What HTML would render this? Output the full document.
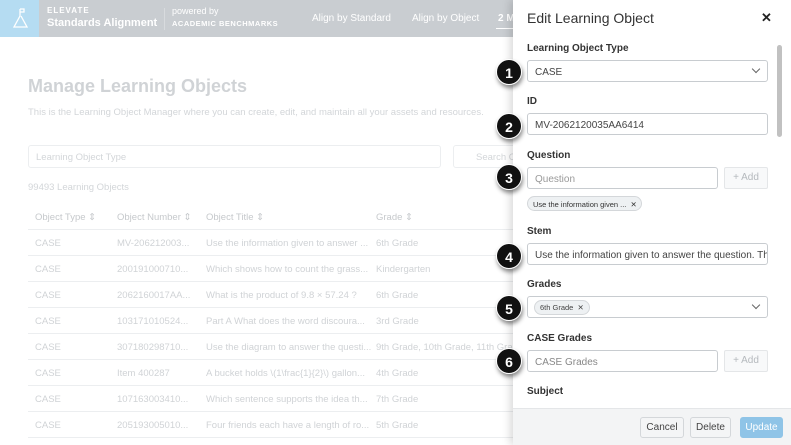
<!DOCTYPE html>
<html><head><meta charset="utf-8"><style>
*{box-sizing:border-box;margin:0;padding:0}
body{width:791px;height:445px;overflow:hidden;position:relative;font-family:"Liberation Sans",sans-serif;background:#fff;color:#333}
.hdr{position:absolute;left:0;top:0;width:791px;height:37px;background:#c9cdd1}
.logo{position:absolute;left:0;top:0;width:39px;height:37px;background:#b5dcf2}
.t{position:absolute;white-space:nowrap}
.row{position:absolute;left:28px;width:490px;height:26px;border-bottom:1px solid #eceef0;font-size:9.5px;color:#d0d3d6}
.row span{position:absolute;top:8px;white-space:nowrap}
.panel{position:absolute;left:513px;top:0;width:278px;height:445px;background:#fff;box-shadow:-3px 0 8px rgba(0,0,0,.15)}
.lbl{position:absolute;left:14px;font-size:10px;font-weight:bold;color:#333}
.inp{position:absolute;left:14px;width:241px;height:22px;border:1px solid #c8ccd0;border-radius:3px;font-size:10px;color:#444;padding:6px 7px;white-space:nowrap;overflow:hidden}
.add{position:absolute;left:211px;width:44px;height:22px;border:1px solid #e4e6e8;background:#f8f9fa;border-radius:2px;font-size:10px;color:#b5b9bd;text-align:center;line-height:20px}
.b{position:absolute;width:26px;height:26px;border-radius:50%;background:#111;color:#fff;font-weight:bold;font-size:14px;text-align:center;line-height:26px;box-shadow:1px 3px 4px rgba(0,0,0,.45);border:1px solid #fff}
.chev{position:absolute;right:8px;top:5px;width:6px;height:6px;border-right:1px solid #666;border-bottom:1px solid #666;transform:rotate(45deg)}
.btn{position:absolute;top:417px;height:21px;border:1px solid #d4d7da;border-radius:3px;background:#f4f5f6;font-size:10px;color:#444;text-align:center;line-height:19px}
</style></head><body>
<div class="hdr">
<div class="logo"><svg width="39" height="37"><path d="M20 9v7 M20 9h4v3h-4 M20 16l-6 11h13l-6-11" stroke="#fff" stroke-width="1.3" fill="none"/></svg></div>
<div class="t" style="left:47px;top:6px;font-size:8px;font-weight:bold;color:#fff;letter-spacing:1px">ELEVATE</div>
<div class="t" style="left:47px;top:17px;font-size:11px;font-weight:bold;color:#fff">Standards Alignment</div>
<div style="position:absolute;left:164px;top:8px;width:1px;height:22px;background:#d8dbde"></div>
<div class="t" style="left:172px;top:6px;font-size:9px;color:#fff">powered by</div>
<div class="t" style="left:172px;top:19px;font-size:7.5px;font-weight:bold;color:#fff;letter-spacing:.5px">ACADEMIC BENCHMARKS</div>
<div class="t" style="left:312px;top:13px;font-size:10px;color:#fff">Align by Standard</div>
<div class="t" style="left:412px;top:13px;font-size:10px;color:#fff">Align by Object</div>
<div class="t" style="left:498px;top:13px;font-size:10px;color:#fff;font-weight:bold">2 M</div>
<div style="position:absolute;left:496px;top:28px;width:17px;height:1px;background:#fff"></div>
</div>
<div class="t" style="left:28px;top:76px;font-size:18px;font-weight:bold;color:#d0d3d6">Manage Learning Objects</div>
<div class="t" style="left:28px;top:107px;font-size:9.5px;color:#d3d6d9">This is the Learning Object Manager where you can create, edit, and maintain all your assets and resources.</div>
<div style="position:absolute;left:28px;top:145px;width:413px;height:23px;border:1px solid #eceef0;border-radius:3px"><span class="t" style="left:7px;top:6px;font-size:9.5px;color:#d3d6d9">Learning Object Type</span></div>
<div style="position:absolute;left:453px;top:145px;width:70px;height:23px;border:1px solid #eceef0;border-radius:3px"><span class="t" style="left:22px;top:6px;font-size:9.5px;color:#d3d6d9">Search O</span></div>
<div class="t" style="left:28px;top:182px;font-size:9.5px;color:#d3d6d9">99493 Learning Objects</div>
<div class="row" style="top:204px;color:#c6c9cc"><span style="left:7px">Object Type ⇕</span><span style="left:89px">Object Number ⇕</span><span style="left:178px">Object Title ⇕</span><span style="left:348px">Grade ⇕</span></div>
<div class="row" style="top:230px"><span style="left:7px">CASE</span><span style="left:89px">MV-206212003...</span><span style="left:178px">Use the information given to answer ...</span><span style="left:348px">6th Grade</span></div>
<div class="row" style="top:256px"><span style="left:7px">CASE</span><span style="left:89px">200191000710...</span><span style="left:178px">Which shows how to count the grass...</span><span style="left:348px">Kindergarten</span></div>
<div class="row" style="top:282px"><span style="left:7px">CASE</span><span style="left:89px">2062160017AA...</span><span style="left:178px">What is the product of  9.8 × 57.24 ?</span><span style="left:348px">6th Grade</span></div>
<div class="row" style="top:308px"><span style="left:7px">CASE</span><span style="left:89px">103171010524...</span><span style="left:178px">Part A What does the word discoura...</span><span style="left:348px">3rd Grade</span></div>
<div class="row" style="top:334px"><span style="left:7px">CASE</span><span style="left:89px">307180298710...</span><span style="left:178px">Use the diagram to answer the questi...</span><span style="left:348px">9th Grade, 10th Grade, 11th Grade</span></div>
<div class="row" style="top:360px"><span style="left:7px">CASE</span><span style="left:89px">Item 400287</span><span style="left:178px">A bucket holds \(1\frac{1}{2}\) gallon...</span><span style="left:348px">4th Grade</span></div>
<div class="row" style="top:386px"><span style="left:7px">CASE</span><span style="left:89px">107163003410...</span><span style="left:178px">Which sentence supports the idea th...</span><span style="left:348px">7th Grade</span></div>
<div class="row" style="top:412px"><span style="left:7px">CASE</span><span style="left:89px">205193005010...</span><span style="left:178px">Four friends each have a length of ro...</span><span style="left:348px">5th Grade</span></div>

<div class="panel">
<div class="t" style="left:14px;top:10px;font-size:14px;color:#333">Edit Learning Object</div>
<div class="t" style="left:248px;top:10px;font-size:13px;font-weight:bold;color:#222">✕</div>
<div class="lbl" style="top:43px">Learning Object Type</div>
<div class="inp" style="top:60px">CASE<div class="chev"></div></div>
<div class="lbl" style="top:96px">ID</div>
<div class="inp" style="top:113px">MV-2062120035AA6414</div>
<div class="lbl" style="top:150px">Question</div>
<div class="inp" style="top:167px;width:191px;color:#999">Question</div>
<div class="add" style="top:167px">+ Add</div>
<div style="position:absolute;left:14px;top:196px;width:115px;height:15px;border:1px solid #d4d7da;border-radius:8px;background:#eef1f3;font-size:7.5px;color:#333;padding:3px 5px;white-space:nowrap">Use the information given ... &nbsp;✕</div>
<div class="lbl" style="top:226px">Stem</div>
<div class="inp" style="top:243px">Use the information given to answer the question.  The ta</div>
<div class="lbl" style="top:279px">Grades</div>
<div class="inp" style="top:296px;padding:3px 6px"><span style="display:inline-block;border:1px solid #d4d7da;border-radius:8px;background:#eef1f3;font-size:7.5px;padding:2px 5px">6th Grade &nbsp;✕</span><div class="chev" style="top:5px"></div></div>
<div class="lbl" style="top:333px">CASE Grades</div>
<div class="inp" style="top:350px;width:191px;color:#888">CASE Grades</div>
<div class="add" style="top:350px">+ Add</div>
<div class="lbl" style="top:386px">Subject</div>
<div style="position:absolute;left:264px;top:45px;width:5px;height:92px;background:#c1c1c1;border-radius:3px"></div>
<div style="position:absolute;left:0;top:408px;width:278px;height:37px;background:#f3f4f5;border-top:1px solid #e4e6e8"></div>
<div class="btn" style="left:127px;width:44px">Cancel</div>
<div class="btn" style="left:177px;width:41px">Delete</div>
<div class="btn" style="left:227px;width:43px;background:#8fc4e7;border-color:#8fc4e7;color:#fff">Update</div>
</div>
<div class="b" style="left:496px;top:59px">1</div>
<div class="b" style="left:496px;top:113px">2</div>
<div class="b" style="left:496px;top:164px">3</div>
<div class="b" style="left:496px;top:243px">4</div>
<div class="b" style="left:496px;top:295px">5</div>
<div class="b" style="left:496px;top:348px">6</div>
</body></html>
